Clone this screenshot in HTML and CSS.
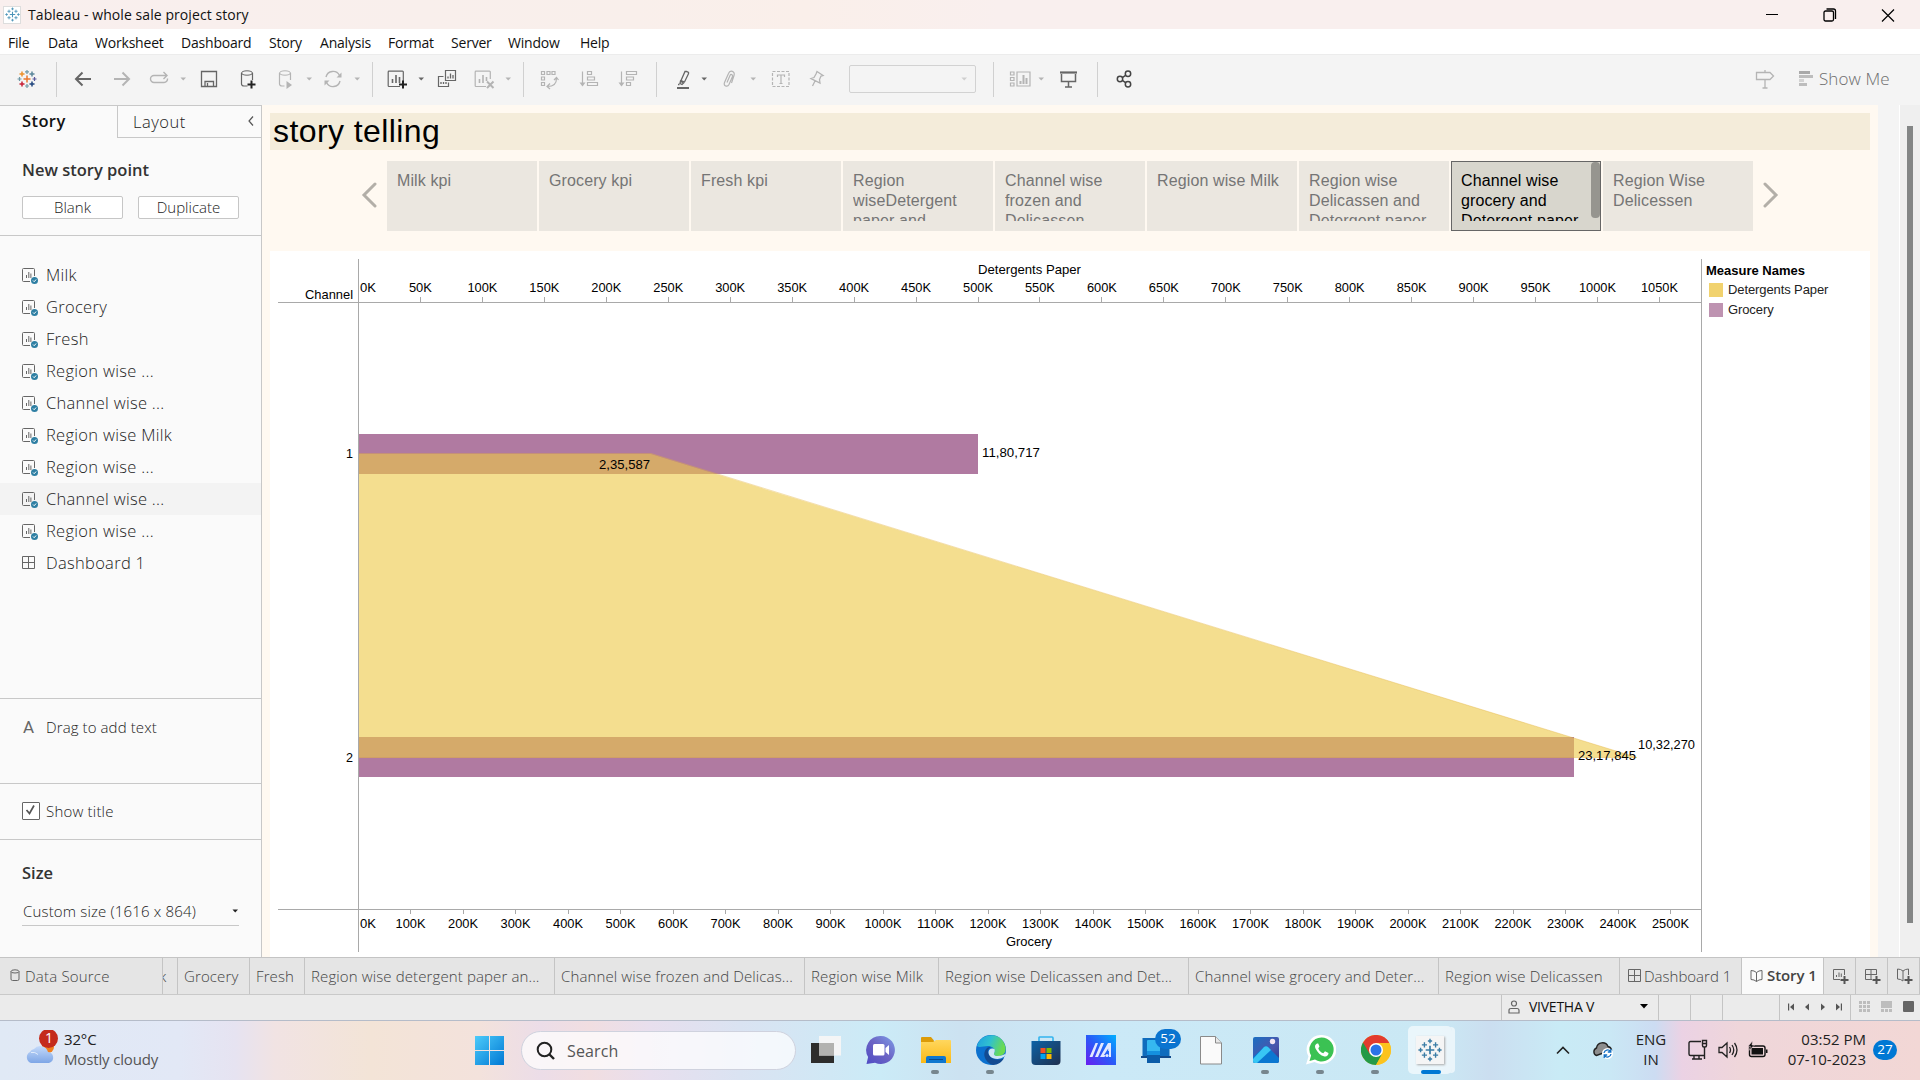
FILE: index.html
```html
<!DOCTYPE html>
<html lang="en">
<head>
<meta charset="utf-8">
<title>Tableau - whole sale project story</title>
<link rel="stylesheet" href="styles.css">
</head>
<body>
<svg class="defs" width="0" height="0">
  <symbol id="caret" viewBox="0 0 8 6"><path d="M1.500 1.500h5.500L4.200 4.500z" fill="currentColor"/></symbol>
  <symbol id="sheet" viewBox="0 0 20 18"><path d="M8 13.500H1.500a1 1 0 0 1-1-1V1.500a1 1 0 0 1 1-1h10a1 1 0 0 1 1 1V8M4.500 7v3M6.800 4v6M8.900 5.500V10" fill="none" stroke="#666"/><circle cx="12.500" cy="12.500" r="3.500" fill="#2e7fa3"/><path d="M11 12.500l1.200 1.200 1.900-2.200" stroke="#fff" fill="none"/></symbol>
  <symbol id="dash" viewBox="0 0 14 14"><path d="M.5.5h12v12H.5zM6.500.5v12M.5 6.500h12" fill="none" stroke="#666"/></symbol>
  <symbol id="book" viewBox="0 0 14 14"><path d="M1 1.500l3 .5 2.500 1.500L9 2l3-.5v9l-3 .5-2.500 1.500L4 11l-3-.5zM6.500 3.500v9" fill="none" stroke="#666"/></symbol>
  <symbol id="marks" viewBox="0 0 28 28"><g fill="none" stroke="currentColor" stroke-width="2"><path d="M14 9v10M9 14h10"/><path stroke-width="1.600" d="M7.500 5v6M4.500 8h6M20.500 5v6M17.500 8h6M7.500 17v6M4.500 20h6M20.500 17v6M17.500 20h6M14 1v5M11.500 3.500h5M14 22v5M11.500 24.500h5M3 11.500v5M.5 14h5M25 11.500v5M22.500 14h5"/></g></symbol>
</svg>

<header class="titlebar">
  <span class="app-icon"><svg width="15" height="15"><use href="#marks"/></svg></span>
  <span class="app-title">Tableau - whole sale project story</span>
  <span class="window-buttons">
    <svg width="14" height="14" viewBox="0 0 14 14"><path d="M1 6.500h12" stroke="#000"/></svg>
    <svg width="14" height="14" viewBox="0 0 14 14" fill="none" stroke="#000"><rect x="1" y="3" width="9.500" height="10" rx="1.500" stroke-width="1.300"/><path d="M3.500 1h7a2 2 0 0 1 2 2v8" stroke-width="1.300"/></svg>
    <svg width="14" height="14" viewBox="0 0 14 14"><path d="M1 1.500l12 12M13 1.500l-12 12" stroke="#000" stroke-width="1.200"/></svg>
  </span>
</header>

<nav class="menubar"><span>File</span><span>Data</span><span>Worksheet</span><span>Dashboard</span><span>Story</span><span>Analysis</span><span>Format</span><span>Server</span><span>Window</span><span>Help</span></nav>

<div class="toolbar">
  <svg class="ic logo" viewBox="0 0 24 24"><g fill="none" stroke-width="1.500"><path stroke="#e8762d" d="M12 8.500v7M8.500 12h7"/><path stroke="#eb912c" d="M7 4.500v5M4.500 7h5"/><path stroke="#5b879b" d="M17 4.500v5M14.500 7h5"/><path stroke="#c72037" d="M7 14.500v5M4.500 17h5"/><path stroke="#1f457e" d="M17 14.500v5M14.500 17h5"/><path stroke="#7199a6" stroke-width="1.200" d="M12 3v4M10 4.800h4M12 17v4M10 19h4"/><path stroke="#59589a" stroke-width="1.200" d="M19.500 10v4M17.500 12h4"/><path stroke="#7199a6" stroke-width="1.200" d="M4.500 10v4M2.500 12h4"/></g></svg>
  <i class="sep m17"></i>
  <svg class="ic m14 dark" viewBox="0 0 24 24"><path stroke-width="2" d="M20 12H5M11.500 5.500L5 12l6.500 6.500"/></svg>
  <svg class="ic m15 dim" viewBox="0 0 24 24"><path stroke-width="2" d="M4 12h15M12.500 5.500L19 12l-6.500 6.500"/></svg>
  <svg class="ic m13 dim" viewBox="0 0 24 24"><path stroke-width="1.400" d="M9 15.500H7a3.500 3.500 0 0 1-3.500-3.500A3.500 3.500 0 0 1 7 8.500h12.500M16.500 5l3.500 3.500-3.500 3.500M20.500 11.500a3.500 3.500 0 0 1-3.500 4H8"/></svg>
  <svg class="caret m8 dim"><use href="#caret"/></svg>
  <svg class="ic m10 dark" viewBox="0 0 24 24"><path stroke-width="1.300" d="M4.500 4.500h15v15h-15zM8 19.500v-5h8.500v5M10.500 16v3.500"/></svg>
  <svg class="ic m15 dark" viewBox="0 0 24 24"><path stroke-width="1.200" d="M11.500 19H8a2.500 2 0 0 1-2.500-2V6M16.500 6v7"/><ellipse cx="11" cy="6" rx="5.500" ry="2.200"/><path stroke="#222" stroke-width="2" d="M15.500 13.500v8M11.500 17.500h8"/></svg>
  <svg class="ic m14 dim" viewBox="0 0 24 24"><path stroke-width="1.200" d="M10.500 19H8a2.500 2 0 0 1-2.500-2V6M16.500 6v7"/><ellipse cx="11" cy="6" rx="5.500" ry="2.200"/><path class="solid" d="M12.500 14l5.500 4-5.500 4z"/></svg>
  <svg class="caret m7 dim"><use href="#caret"/></svg>
  <svg class="ic m8 dim" viewBox="0 0 24 24"><path stroke-width="1.400" d="M5 10a7.200 7.200 0 0 1 13.500-1.500M19 14a7.200 7.200 0 0 1-13.500 1.500"/><path class="solid" d="M20.500 5.500v5h-5zM3.500 18.500v-5h5z"/></svg>
  <svg class="caret m8 dim"><use href="#caret"/></svg>
  <i class="sep m11"></i>
  <svg class="ic m13 dark" viewBox="0 0 24 24"><path stroke-width="1.200" d="M14 19.500H3a.8.800 0 0 1-.8-.8V5a.8.800 0 0 1 .8-.8h13.500a.8.800 0 0 1 .8.800v9"/><path stroke-width="1.600" d="M6.500 12v4M10 8v8M13.500 10v6"/><path stroke="#222" stroke-width="2" d="M17 13.500v8M13 17.500h8"/></svg>
  <svg class="caret m7 dark"><use href="#caret"/></svg>
  <svg class="ic m10 dark" viewBox="0 0 24 24"><path stroke-width="1.200" d="M10.500 3.500h10v10h-10zM8.500 9.500h-5v10h10v-4"/><path stroke-width="1.300" d="M13 9.500v2M15.500 6.500v5M18 8v3.500M6 15v2M8.500 15v2M11 15v2"/></svg>
  <svg class="ic m14 dim" viewBox="0 0 24 24"><path stroke-width="1.200" d="M13 19.500H3a.8.800 0 0 1-.8-.8V5a.8.800 0 0 1 .8-.8h13.500a.8.800 0 0 1 .8.800v7"/><path stroke-width="1.600" d="M6.500 12v4M10 8v8M13.500 10v4"/><path stroke-width="2" d="M14 14.500l6.500 6.500M20.500 14.500L14 21"/></svg>
  <svg class="caret m7 dim"><use href="#caret"/></svg>
  <i class="sep m11"></i>
  <svg class="ic m14 dim" viewBox="0 0 24 24"><path stroke-width="1.200" d="M3.500 4.500h3v3h-3zM9 4.500h3v3H9zM14 4.500h3v3h-3zM3.500 10h3v3h-3zM3.500 15.500h3v3h-3zM18.500 11.500c0 5-3 8-9 8M16 13l2.500-2.500 2 2.500M12 16.500l-3 3 3 2.500"/></svg>
  <svg class="ic m15 dim" viewBox="0 0 24 24"><path stroke-width="1.200" d="M5.500 4.500v14M10.500 4.500h4v3h-4zM10.500 10h7v3h-7zM10.500 15.500h10v3h-10z"/><path class="solid" d="M2.500 15.500h6l-3 4z"/></svg>
  <svg class="ic m15 dim" viewBox="0 0 24 24"><path stroke-width="1.200" d="M5.500 4.500v14M10.500 4.500h10v3h-10zM10.500 10h7v3h-7zM10.500 15.500h4v3h-4z"/><path class="solid" d="M2.500 15.500h6l-3 4z"/></svg>
  <i class="sep m16"></i>
  <svg class="ic m14 dark" viewBox="0 0 24 24"><path stroke-width="1.300" d="M10 13.500l4-9h1.500l2 1v1.200L13.500 15zM9.500 14l3 2-1.500 1.500-2-1zM8.500 17.500H7"/><path stroke-width="2" d="M6 21h12"/></svg>
  <svg class="caret m5 dark"><use href="#caret"/></svg>
  <svg class="ic m9 dim" viewBox="0 0 24 24"><path stroke-width="1.200" d="M10 15.500l3-7c.8-1.800 3-1 2.500 1l-3.500 8c-1.500 3-6 1.500-4.500-2L11.500 6.500c1.500-4 7-2.500 5.500 2l-2.500 7.500"/></svg>
  <svg class="caret m8 dim"><use href="#caret"/></svg>
  <svg class="ic m12 dim" viewBox="0 0 24 24"><path stroke-dasharray="3 1.500" stroke-width="1.200" d="M3.500 4.500H20v15H3.500z"/><path stroke-width="1.200" d="M8.500 10V8h7v2M12 8v8.500M10.500 16.500h3"/></svg>
  <svg class="ic m12 dim" viewBox="0 0 24 24"><path stroke-width="1.300" d="M12 4.500l6 4-2 .5-1.500 3.500.5 3.500-9-4.500 3-1 2-3.500zM10 14l-2.500 5"/></svg>
  <span class="select"><svg class="caret"><use href="#caret"/></svg></span>
  <i class="sep m16"></i>
  <svg class="ic m14 dim" viewBox="0 0 24 24"><path stroke-width="1.200" d="M2.500 5h3.500v3H2.500zM2.500 10.500h3.500v3H2.500zM2.500 16h3.500v3H2.500zM9 5h13v14H9z"/><path stroke-width="2" d="M12.500 14v3M15.500 8v9M18.500 11v6"/></svg>
  <svg class="caret m5 dim"><use href="#caret"/></svg>
  <svg class="ic m11 dark" viewBox="0 0 24 24"><path stroke-width="2.200" d="M4 5.500h17"/><path stroke-width="1.500" d="M5.500 7v7.500h14V7M12.500 15v5M9 20h7"/></svg>
  <i class="sep m17"></i>
  <svg class="ic m15 dark" viewBox="0 0 24 24"><g stroke="#444" stroke-width="1.500"><circle cx="7" cy="12" r="2.700"/><circle cx="15" cy="6.800" r="2.700"/><circle cx="15" cy="17.200" r="2.700"/><path d="M9.300 10.600l3.300-2.200M9.300 13.400l3.300 2.300"/></g></svg>
  <svg class="ic push dim" viewBox="0 0 24 24"><path stroke-width="1.300" d="M3.500 5.500H17L20.500 9 17 12.500H3.500zM12 3v2.500M12 12.500V21M9.500 21h5"/></svg>
  <svg class="showme-icon" viewBox="0 0 14 16"><path fill="#a9a9a9" d="M0 0h11v3H0z"/><path fill="#bdbdbd" d="M0 4h14v3H0zM0 12h8v3H0z"/><path fill="#d3d3d3" d="M0 8h5v3H0z"/></svg>
  <span class="showme">Show Me</span>
</div>

<main class="workspace">
  <aside class="sidebar">
    <div class="side-tabs"><b>Story</b><span>Layout<svg width="8" height="12" viewBox="0 0 8 12"><path d="M6 1.500L2 6l4 4.500" fill="none" stroke="#555" stroke-width="1.200"/></svg></span></div>
    <section class="new-point">
      <h2>New story point</h2>
      <div class="buttons"><button>Blank</button><button>Duplicate</button></div>
    </section>
    <ul class="sheets">
      <li><svg width="20" height="18"><use href="#sheet"/></svg>Milk</li>
      <li><svg width="20" height="18"><use href="#sheet"/></svg>Grocery</li>
      <li><svg width="20" height="18"><use href="#sheet"/></svg>Fresh</li>
      <li><svg width="20" height="18"><use href="#sheet"/></svg>Region wise ...</li>
      <li><svg width="20" height="18"><use href="#sheet"/></svg>Channel wise ...</li>
      <li><svg width="20" height="18"><use href="#sheet"/></svg>Region wise Milk</li>
      <li><svg width="20" height="18"><use href="#sheet"/></svg>Region wise ...</li>
      <li class="current"><svg width="20" height="18"><use href="#sheet"/></svg>Channel wise ...</li>
      <li><svg width="20" height="18"><use href="#sheet"/></svg>Region wise ...</li>
      <li class="dashboard"><svg width="14" height="14"><use href="#dash"/></svg>Dashboard 1</li>
    </ul>
    <section class="drag"><span class="letter">A</span>Drag to add text</section>
    <section class="show-title"><span class="check"><svg width="16" height="16" viewBox="0 0 16 16"><path d="M3.500 7l3 3.500 4.500-8" fill="none" stroke="#555" stroke-width="1.700"/></svg></span>Show title</section>
    <section class="size">
      <h2>Size</h2>
      <div class="size-select">Custom size (1616 x 864)<svg class="caret"><use href="#caret"/></svg></div>
    </section>
  </aside>

  <div class="story">
    <h1>story telling</h1>
    <div class="navigator">
      <svg class="arrow" viewBox="0 0 16 26"><path d="M14 2L3 13l11 11"/></svg>
      <div class="point"><p>Milk kpi</p></div>
      <div class="point"><p>Grocery kpi</p></div>
      <div class="point"><p>Fresh kpi</p></div>
      <div class="point"><p>Region wiseDetergent paper and</p></div>
      <div class="point"><p>Channel wise frozen and Delicassen</p></div>
      <div class="point"><p>Region wise Milk</p></div>
      <div class="point"><p>Region wise Delicassen and Detergent paper</p></div>
      <div class="point active"><p>Channel wise grocery and Detergent paper</p></div>
      <div class="point"><p>Region Wise Delicessen</p></div>
      <svg class="arrow" viewBox="0 0 16 26"><path d="M2 2l11 11L2 24"/></svg>
    </div>
    <div class="view">
      <svg class="chart" width="1432" height="706" viewBox="270 251 1432 706">
        <g fill="#b07aa1"><rect x="359" y="434" width="619" height="40"/><rect x="359" y="737" width="1215" height="40"/></g>
        <path d="M359 454H651L1637 757.500H359z" fill="#edc948" fill-opacity=".61"/>
        <path d="M359 453.500H651L1637 757.500H359" fill="none" stroke="#e3b23c" stroke-opacity=".4"/>
        <g id="axes" stroke="#a9a9a9"><path d="M358.500 259V952M1701.500 259V952M278 302.500H1701M278 909.500H1701"/></g>
        <g id="labels">
          <text x="305" y="299" textLength="48" lengthAdjust="spacingAndGlyphs">Channel</text>
          <text x="346" y="458" textLength="7" lengthAdjust="spacingAndGlyphs">1</text>
          <text x="346" y="762" textLength="7" lengthAdjust="spacingAndGlyphs">2</text>
          <text x="978" y="274" textLength="103" lengthAdjust="spacingAndGlyphs">Detergents Paper</text>
          <text x="1006" y="946" textLength="46" lengthAdjust="spacingAndGlyphs">Grocery</text>
          <text x="982" y="457" textLength="58" lengthAdjust="spacingAndGlyphs">11,80,717</text>
          <text x="599" y="469" textLength="51" lengthAdjust="spacingAndGlyphs">2,35,587</text>
          <text x="1578" y="760" textLength="58" lengthAdjust="spacingAndGlyphs">23,17,845</text>
          <text x="1638" y="749" textLength="57" lengthAdjust="spacingAndGlyphs">10,32,270</text>
        </g>
      </svg>
      <div class="legend">
        <b>Measure Names</b>
        <span><i class="yellow"></i>Detergents Paper</span>
        <span><i class="purple"></i>Grocery</span>
      </div>
    </div>
  </div>
  <div class="scroll"><i></i></div>
</main>

<div class="tabs">
  <span class="t-source"><svg width="10" height="13" viewBox="0 0 10 13"><path d="M1 2.500v7.500q0 1.500 1.500 1.500h5Q9 11.500 9 10V2.500M1 2.500Q1 .8 5 .8t4 1.700Q9 4 5 4T1 2.500" fill="none" stroke="#666"/></svg>Data Source</span>
  <span class="t-cut">k</span>
  <span class="t-grocery">Grocery</span>
  <span class="t-fresh">Fresh</span>
  <span class="t-wide">Region wise detergent paper an...</span>
  <span class="t-wide">Channel wise frozen and Delicas...</span>
  <span class="t-milk">Region wise Milk</span>
  <span class="t-wide">Region wise Delicassen and Det...</span>
  <span class="t-wide">Channel wise grocery and Deter...</span>
  <span class="t-deli">Region wise Delicassen</span>
  <span class="t-dash"><svg width="14" height="14"><use href="#dash"/></svg>Dashboard 1</span>
  <span class="t-story"><svg width="14" height="14"><use href="#book"/></svg>Story 1</span>
  <span class="t-new"><svg width="18" height="18" viewBox="0 0 18 18"><path d="M8 12.500H1.500v-10h11V8M4.500 8v2M7 5.500V10M9.300 6.500V10" fill="none" stroke="#666"/><path d="M12.500 9v8M8.500 13h8" stroke="#555" stroke-width="2"/></svg></span>
  <span class="t-new"><svg width="18" height="18" viewBox="0 0 18 18"><path d="M8 12.500H1.500v-10h11V8M7 2.500v10M1.500 7.500h11" fill="none" stroke="#666"/><path d="M12.500 9v8M8.500 13h8" stroke="#555" stroke-width="2"/></svg></span>
  <span class="t-new"><svg width="18" height="18" viewBox="0 0 18 18"><path d="M7 14l-2.500-1.500-3-.5V2l3 .5L7 4l2.500-1.500 3-.5v6M7 4v10" fill="none" stroke="#666"/><path d="M12.500 9v8M8.500 13h8" stroke="#555" stroke-width="2"/></svg></span>
</div>

<div class="status">
  <span class="user"><svg width="12" height="14" viewBox="0 0 12 14"><path d="M6 1a2.500 2.500 0 1 1 0 5 2.500 2.500 0 1 1 0-5M1 13v-2.500Q1 8.500 3 8.500h6q2 0 2 2V13z" fill="none" stroke="#666" stroke-width="1.200"/></svg>VIVETHA V<svg class="ucaret" width="8" height="5" viewBox="0 0 8 5"><path d="M0 0h8L4 4.500z"/></svg></span>
  <span class="cell"></span><span class="cell"></span><span class="cell wide"></span>
  <span class="pager">
    <svg width="8" height="8" viewBox="0 0 8 8"><path d="M1 .5h1.200v7H1zM7 .5v7L3 4z"/></svg>
    <svg width="8" height="8" viewBox="0 0 8 8"><path d="M6 .5v7L2 4z"/></svg>
    <svg width="8" height="8" viewBox="0 0 8 8"><path d="M2 .5v7L6 4z"/></svg>
    <svg width="8" height="8" viewBox="0 0 8 8"><path d="M5.800.5H7v7H5.800zM1 .5v7L5 4z"/></svg>
  </span>
  <span class="modes">
    <svg width="11" height="11" viewBox="0 0 11 11" fill="#bdbdbd"><path d="M0 0h3v3H0zM4 0h3v3H4zM8 0h3v3H8zM0 4h3v3H0zM4 4h3v3H4zM8 4h3v3H8zM0 8h3v3H0zM4 8h3v3H4zM8 8h3v3H8z"/></svg>
    <svg width="11" height="11" viewBox="0 0 11 11" fill="#bdbdbd"><path d="M0 0h11v7H0zM0 8h3v3H0zM4 8h3v3H4zM8 8h3v3H8z"/></svg>
    <svg width="11" height="11" viewBox="0 0 11 11"><rect width="11" height="11" rx="1" fill="#666"/></svg>
  </span>
</div>

<footer class="taskbar">
  <div class="weather">
    <svg width="36" height="42" viewBox="0 0 36 42"><defs><linearGradient id="cl" x2="0" y2="1"><stop offset="0" stop-color="#c4dafa"/><stop offset="1" stop-color="#7ea6e6"/></linearGradient></defs><circle cx="23" cy="17" r="6" fill="#f0801f"/><path d="M6 33a6 6 0 0 1-1-11 5 5 0 0 1 4-3 8 8 0 0 1 14 3 5.600 5.600 0 0 1 1 11z" fill="url(#cl)"/><path d="M6 22.500q4-1 7 2" stroke="#e0ecfc" fill="none"/><circle cx="24" cy="8" r="8" fill="#c42b1c"/><circle cx="23.500" cy="8.500" r="9.500" fill="#c42b1c"/><text x="20" y="13" class="badge-text">1</text></svg>
    <p><span>32°C</span><span class="sub">Mostly cloudy</span></p>
  </div>
  <svg class="start" viewBox="0 0 29 29"><defs><linearGradient id="wn" gradientUnits="userSpaceOnUse" x1="0" y1="0" x2="29" y2="29"><stop stop-color="#4ccbfa"/><stop offset="1" stop-color="#0078d4"/></linearGradient></defs><path fill="url(#wn)" d="M0 0h14v14H0zM15 0h14v14H15zM0 15h14v14H0zM15 15h14v14H15z"/></svg>
  <div class="search"><svg width="20" height="20" viewBox="0 0 20 20"><circle cx="8.500" cy="8.500" r="6.800" fill="none" stroke="#222" stroke-width="2"/><path d="M13.500 13.500L18 18" stroke="#222" stroke-width="2.400"/></svg>Search</div>
  <div class="apps">
    <span><svg viewBox="0 0 30 30"><rect y="8" width="23" height="20" fill="#2d2d2c"/><rect x="8" y="1" width="22" height="19.500" fill="#f5f5f5" fill-opacity=".95"/><rect x="8" y="8" width="15" height="12.500" fill="#b2b2b0"/></svg></span>
    <span><svg viewBox="0 0 30 30"><defs><linearGradient id="ch" x1="0" x2="1" y2="0" y1="1"><stop stop-color="#4f4bc4"/><stop offset=".5" stop-color="#6b63c4"/><stop offset="1" stop-color="#7f9ee8"/></linearGradient></defs><path d="M15 1a14 14 0 1 1-6 26.700L.5 29l1.600-7A14 14 0 0 1 15 1z" fill="url(#ch)"/><rect x="7" y="9" width="11.500" height="11.500" rx="1.500" fill="#fff"/><path d="M19.500 13l3.500-3v10l-3.500-3z" fill="#fff"/></svg></span>
    <span class="open"><svg viewBox="0 0 30 30"><defs><linearGradient id="fo" x2="0" y2="1"><stop stop-color="#ffd75e"/><stop offset="1" stop-color="#fbb916"/></linearGradient></defs><path d="M0 3q0-1 1-1h9l3 3.500V8H0z" fill="#dc9b08"/><path d="M0 7h12l3-2h14q1 0 1 1v22H0z" fill="url(#fo)"/><path d="M5 28v-5q0-2 2-2h16q2 0 2 2v5z" fill="#0f77cf"/><path d="M8 24.500h14" stroke="#0a4a8c"/></svg></span>
    <span class="open"><svg viewBox="0 0 30 30"><defs><linearGradient id="e1" x2="1" y2=".3"><stop stop-color="#1e9fe0"/><stop offset=".5" stop-color="#30c0d0"/><stop offset="1" stop-color="#6bdb50"/></linearGradient></defs><circle cx="15" cy="15" r="15" fill="#0c71cf"/><path d="M1 11C4-1 22-4 28 8c4 8 0 13-6 13-3 0-5-1-4-3 2-3-1-7-6-7-5 0-9 2-11 0z" fill="url(#e1)"/><path d="M11 13c-6 6-1 15 6 17 5 0 9-3 11-7-7 4-16 0-16-7 0-1 1-3 3-4-2 0-3 0-4 1z" fill="#134b92"/><path d="M18.500 14a4 4 0 0 0-6 3q0 4 4 6 7 2.500 12-1.500l1.500-3-3 1.500c-5 2-10 1-9-1.500q1.500-2 .5-4.500z" fill="#cfe6f5"/></svg></span>
    <span><svg viewBox="0 0 30 30"><defs><linearGradient id="st" x2="1" y2="1"><stop stop-color="#0c62a6"/><stop offset="1" stop-color="#20304f"/></linearGradient></defs><path d="M8 7V2.500Q8 2 9 2h12q1 0 1 1v4" fill="none" stroke="#33b4ee" stroke-width="1.600"/><path d="M.5 6h29v20q0 4-4 4h-21q-4 0-4-4z" fill="url(#st)"/><path fill="#f25022" d="M9.500 13h5v5h-5z"/><path fill="#7fba00" d="M15.500 13h5v5h-5z"/><path fill="#00a4ef" d="M9.500 19h5v5h-5z"/><path fill="#ffb900" d="M15.500 19h5v5h-5z"/></svg></span>
    <span><svg viewBox="0 0 30 30"><defs><linearGradient id="as" x1="0" y1="1" x2="1" y2="0"><stop stop-color="#6a1cf0"/><stop offset=".5" stop-color="#2a5af8"/><stop offset="1" stop-color="#00b0ff"/></linearGradient></defs><path d="M0 0h30v30H0z" fill="url(#as)"/><path fill="#e3e8ff" d="M3.500 22L9.500 8H12L6.500 22zM9 22L15 8h3l-6 14zM14 22l8-14h3v8h-2.800v-2.500L18 20h1.500l-1 2z"/><circle cx="21" cy="20.500" r="1.600" fill="#e3e8ff"/><path fill="#e3e8ff" d="M23 15h2v7h-2z"/></svg></span>
    <span class="phone"><svg viewBox="0 0 30 30"><path d="M1.500 3h27v19h-27z" fill="#0f6cbd"/><path d="M0 21h30v2H0z" fill="#114a8b"/><rect x="6" y="5" width="13" height="23" rx="1" fill="#35b8f0"/><path d="M6 16h13v12H6z" fill="#1490df"/><path d="M6 20h13v8H6z" fill="#0c5ca8"/></svg><em>52</em></span>
    <span><svg viewBox="0 0 30 30"><path d="M4.500 1.500h15l6 6.500v21h-21z" fill="#fafafa" stroke="#8a8a8a"/><path d="M19.500 1.500V8h6" fill="#e8e8e8" stroke="#8a8a8a"/></svg></span>
    <span class="open"><svg viewBox="0 0 30 30"><defs><linearGradient id="ph" x2="1" y2="1"><stop stop-color="#1b6fc2"/><stop offset=".6" stop-color="#4a55ac"/><stop offset="1" stop-color="#2a3a8c"/></linearGradient></defs><rect x="2" y="2" width="26" height="26" rx="2" fill="url(#ph)"/><path d="M2 22L13 12q2-1.500 4 0l11 11v3q0 2-2 2H4q-2 0-2-2z" fill="#0a77d1"/><path d="M2 24L13 12q2-1.500 4 0l3 3L6 28H4q-2 0-2-2z" fill="#38c6f4"/><circle cx="21.500" cy="6.500" r="2.700" fill="#f3e5f2"/></svg></span>
    <span class="open"><svg viewBox="0 0 30 30"><path d="M15.500 0a14.500 14.500 0 1 1-7 27L0 29.500l2.500-8A14.500 14.500 0 0 1 15.500 0z" fill="#fff"/><path d="M15.500 2.500a12 12 0 1 1-6.500 22L3.500 26l1.600-5.500A12 12 0 0 1 15.500 2.500z" fill="#3bc253"/><path d="M11 8.500q-3 1.500-1.500 5c2 4 5 7 9 8 2 .5 4-1 4-3.500L19 16.200l-1.700 2q-4-1.500-5-5l1.200-1.700L12.200 8.500z" fill="#fff"/></svg></span>
    <span class="open"><svg viewBox="0 0 30 30"><circle cx="15" cy="15" r="15" fill="#fcc31e"/><path d="M15 15L2 7.500A15 15 0 0 0 15 30l6-10z" fill="#249a48"/><path d="M15 8H28.300A15 15 0 0 0 2 7.500L8.800 19 15 15z" fill="#e33b2e"/><path d="M15 30A15 15 0 0 0 28.300 8H15l6 11z" fill="#fcc31e"/><circle cx="15" cy="15" r="7" fill="#fff"/><circle cx="15" cy="15" r="5.500" fill="#2a73e8"/></svg></span>
    <span class="tableau"><i><svg width="24" height="24"><use href="#marks"/></svg></i></span>
  </div>
  <div class="tray">
    <svg class="up" width="16" height="10" viewBox="0 0 16 10"><path d="M2 8.500L8 2.500l6 6" fill="none" stroke="#222" stroke-width="1.600"/></svg>
    <svg class="cloud" width="22" height="18" viewBox="0 0 22 18"><path d="M4.500 14.500a4 4 0 0 1 0-7.500 6 6 0 0 1 11.500-1.500A4.500 4.500 0 0 1 19.500 9z" fill="#8d8d8d" stroke="#222" stroke-width="1.400"/><circle cx="15.500" cy="12.500" r="5.500" fill="#fff"/><path d="M12 12a3.600 3.600 0 0 1 6.500-1.500M19 13a3.600 3.600 0 0 1-6.500 1.500M18.800 8v3h-3M12.200 17v-3h3" fill="none" stroke="#1370c4" stroke-width="1.300"/></svg>
    <p class="lang"><span>ENG</span><span>IN</span></p>
    <svg class="net" width="20" height="22" viewBox="0 0 20 22"><path d="M13 2.500H2.500q-1.500 0-1.500 1.500v11q0 1.500 1.500 1.500H16M6 16.500V20M11 16.500V20M4 20h10M14.500 1.500h4v5q0 1.500-1.500 1.500h-1q-1.500 0-1.500-1.500zM16.500 8v12M14.500 4.500h4" fill="none" stroke="#222" stroke-width="1.400"/></svg>
    <svg class="vol" width="20" height="18" viewBox="0 0 20 18"><path d="M1 6.500v5h3l5 4.500V2L4 6.500zM11.500 6q2 3 0 6M14 4q3.500 5 0 10M16.500 2q5 7 0 14" fill="none" stroke="#222" stroke-width="1.300"/></svg>
    <svg class="bat" width="22" height="18" viewBox="0 0 22 18"><rect x="2.500" y="5" width="15.500" height="10.500" rx="2" fill="none" stroke="#111" stroke-width="1.400"/><rect x="4.500" y="7" width="11.500" height="6.500" fill="#111"/><path d="M19 8.500h1.500v3.500H19z" fill="#111"/><path d="M5.500 0L1 5.500h2.500L2 9.500 7.500 4H5z" fill="#111" stroke="#eed5da" stroke-width=".5"/></svg>
    <p class="clock"><span>03:52 PM</span><span>07-10-2023</span></p>
    <em class="count">27</em>
  </div>
</footer>
<script src="script.js"></script>
</body>
</html>
```
FILE: styles.css
```css
* { box-sizing: border-box; }
body { margin: 0; width: 1920px; height: 1080px; overflow: hidden; display: flex; flex-direction: column; font-family: "Open Sans", "Noto Sans", sans-serif; color: #333; background: #f4f4f4; }
h1, h2, p, ul { margin: 0; padding: 0; }
h1 { font-weight: normal; }
.defs { position: absolute; }
svg { display: block; flex: none; }
em { font-style: normal; }

.titlebar { height: 29px; display: flex; align-items: center; padding-left: 3px; background: linear-gradient(90deg, #f9efee, #f9efeb 33%, #faefea 42%, #f9efee 52%); color: #111; font-size: 14px; }
.app-icon { width: 18px; height: 18px; background: #fff; border: 1px solid #ddd; color: #4b93b8; display: grid; place-items: center; margin-right: 7px; }
.app-title { letter-spacing: .07px; }
.window-buttons { display: flex; gap: 44px; margin: 0 25px 0 auto; }

.menubar { height: 25px; flex: none; display: grid; grid-template-columns: 40px 47px 86px 88px 51px 68px 63px 57px 72px 60px; padding-left: 8px; background: #fff; color: #111; font-size: 14px; line-height: 27px; letter-spacing: -.2px; }

.toolbar { height: 51px; flex: none; display: flex; align-items: center; padding: 0 29px 2px 15px; border-top: 1px solid #ececec; background: #f4f4f4; }
.ic { width: 24px; height: 24px; fill: none; stroke: currentColor; }
.ic .solid { fill: currentColor; stroke: none; }
.caret { width: 8px; height: 6px; }
.dark { color: #666; }
.dim { color: #b4b4b4; }
.sep { width: 1px; height: 35px; background: #d0d0d0; }
.m5 { margin-left: 5px; } .m7 { margin-left: 7px; } .m8 { margin-left: 8px; } .m9 { margin-left: 9px; }
.m10 { margin-left: 10px; } .m11 { margin-left: 11px; } .m12 { margin-left: 12px; } .m13 { margin-left: 13px; }
.m14 { margin-left: 14px; } .m15 { margin-left: 15px; } .m16 { margin-left: 16px; } .m17 { margin-left: 17px; }
.select { width: 127px; height: 28px; margin: 0 1px 0 20px; border: 1px solid #d2d2d2; border-radius: 2px; display: flex; justify-content: flex-end; align-items: center; padding-right: 7px; color: #cfcfcf; }
.push { margin-left: auto; }
.showme-icon { width: 14px; height: 16px; margin: 0 6px 0 22px; }
.showme { font-size: 17px; font-weight: 300; color: #6d6d6d; width: 72px; white-space: nowrap; padding-bottom: 2px; letter-spacing: .1px; }

.workspace { height: 852px; flex: none; display: flex; }
.sidebar { width: 262px; background: #fafafa; border-right: 1px solid #c8c8c8; border-top: 1px solid #c8c8c8; display: flex; flex-direction: column; color: #222; font-weight: 300; }
.side-tabs { height: 32px; display: flex; font-size: 16.500px; }
.side-tabs b { width: 117px; padding-left: 22px; line-height: 30px; color: #111; font-weight: 600; letter-spacing: .4px; }
.side-tabs span { flex: 1; border-left: 1px solid #c8c8c8; border-bottom: 1px solid #c8c8c8; padding: 0 6px 0 15px; line-height: 32px; display: flex; justify-content: space-between; letter-spacing: .5px; }
.side-tabs svg { margin-top: 9px; }
h2 { font-size: 16.500px; font-weight: 600; color: #333; }
.new-point { height: 98px; padding: 20px 22px 0; border-bottom: 1px solid #c8c8c8; }
.new-point h2 { line-height: 24px; }
.buttons { display: flex; gap: 15px; margin-top: 14px; }
.buttons button { width: 101px; height: 23px; padding: 0 0 1px; font: 300 15px "Open Sans", sans-serif; color: #222; background: #fff; border: 1px solid #c6c6c6; border-radius: 2px; line-height: 19px; }
.sheets { list-style: none; padding-top: 23px; height: 463px; border-bottom: 1px solid #c8c8c8; }
.sheets li { height: 32px; padding: 0 0 2px 22px; display: flex; align-items: center; gap: 4px; font-size: 16.500px; letter-spacing: .3px; }
.sheets li svg { margin-top: 5px; }
.sheets .current { background: #f3f3f3; }
.sheets .dashboard { gap: 10px; }
.sheets .dashboard svg { margin-top: 2px; }
.drag { height: 85px; padding: 16px 0 0 23px; border-bottom: 1px solid #c8c8c8; display: flex; font-size: 15px; line-height: 24px; letter-spacing: .1px; }
.letter { width: 23px; font: 17px/24px "Roboto", sans-serif; color: #666; }
.show-title { height: 56px; display: flex; align-items: center; padding: 0 0 2px 22px; gap: 6px; border-bottom: 1px solid #c8c8c8; font-size: 15px; letter-spacing: .2px; }
.check { width: 18px; height: 18px; border: 1px solid #666; border-radius: 1px; background: #fff; }
.size { padding: 21px 22px 0; }
.size h2 { line-height: 24px; }
.size-select { margin-top: 14px; height: 27px; padding: 0 0 3px 1px; border-bottom: 1px solid #c8c8c8; display: flex; align-items: center; justify-content: space-between; font-size: 15px; letter-spacing: .17px; }

.story { width: 1616px; padding: 8px 8px 0; background: #fff9f1; font-family: "Liberation Sans", Arial, sans-serif; }
.story h1 { height: 37px; padding-left: 3px; line-height: 37px; font-size: 32px; letter-spacing: .42px; color: #000; background: #f4ecda; }
.navigator { height: 70px; margin: 11px 0 20px; display: flex; gap: 2px; padding-left: 91px; align-items: center; }
.arrow { width: 16px; height: 26px; margin-bottom: 2px; fill: none; stroke: #b3afa8; stroke-width: 3; stroke-linecap: round; }
.arrow:first-child { margin-right: 8px; }
.arrow:last-child { margin-left: 8px; }
.point { width: 150px; height: 70px; padding: 10px 0 0 10px; background: #ebe7e0; color: #757575; font-size: 16px; line-height: 20px; letter-spacing: .12px; }
.point p { height: 50px; overflow: hidden; width: 134px; }
.point.active { position: relative; background: #d8d6cd; border: 1px solid #666; padding: 9px 0 0 9px; color: #000; }
.point.active::after { content: ""; position: absolute; right: 0; top: 0; width: 9px; height: 56px; border-radius: 4px; background: #96958f; }
.view { height: 706px; background: #fff; display: flex; }
.chart text { font: 13.500px "Liberation Sans", Arial, sans-serif; fill: #000; }
.legend { padding: 11px 0 0 4px; font-size: 13px; color: #222; }
.legend b { display: block; font-size: 13px; line-height: 17px; color: #000; }
.legend span { display: flex; align-items: center; height: 20px; padding-left: 3px; letter-spacing: -.1px; }
.legend i { width: 14px; height: 14px; margin: 2px 5px 0 0; }
.yellow { background: #f1d26e; }
.purple { background: #be93b1; }
.scroll { flex: 1; margin-left: 21px; border-left: 1px solid #fff; background: #efefef; padding: 21px 0 0 7px; }
.scroll i { display: block; width: 6px; height: 797px; background: #848686; }

.tabs { height: 38px; flex: none; display: flex; border-top: 1px solid #c4c4c4; border-bottom: 1px solid #c9c9c9; background: #e5e5e5; color: #444; font-size: 15px; font-weight: 300; }
.tabs span { border-right: 1px solid #c4c4c4; padding-left: 6px; line-height: 37px; white-space: nowrap; overflow: hidden; display: flex; align-items: center; letter-spacing: .12px; }
.tabs .t-source { width: 163px; padding-left: 10px; gap: 5px; letter-spacing: .2px; }
.tabs .t-source svg { margin-bottom: 2px; }
.tabs .t-cut { width: 15px; padding: 0; text-indent: -4px; }
.t-grocery { width: 72px; } .t-fresh { width: 55px; } .t-wide { width: 250px; } .t-milk { width: 134px; } .t-deli { width: 181px; }
.tabs .t-dash { width: 122px; padding-left: 8px; gap: 2px; letter-spacing: 0; }
.tabs .t-story { width: 82px; background: #fafafa; font-weight: 600; padding-left: 8px; gap: 3px; letter-spacing: -.1px; line-height: 35px; padding-bottom: 1px; }
.tabs .t-new { width: 32px; padding-left: 8px; }

.status { height: 25px; flex: none; display: flex; justify-content: flex-end; background: #ebebeb; }
.status > span { border-left: 1px solid #c4c4c4; display: flex; align-items: center; padding-bottom: 2px; }
.status > .user { width: 157px; padding: 0 10px 2px 6px; gap: 9px; font-size: 14px; letter-spacing: -.25px; color: #111; }
.ucaret { margin-left: auto; }
.cell { width: 32px; } .cell.wide { width: 57px; }
.status > .pager { width: 71px; gap: 8px; padding-left: 7px; fill: #555; }
.status > .modes { width: 70px; gap: 11px; padding-left: 8px; }

.taskbar { height: 60px; flex: none; display: flex; align-items: center; border-top: 1px solid #b5bcc9; background: linear-gradient(90deg, #e0e9f5 0, #e2e8f6 180px, #e6e3f1 235px, #f1e3e3 275px, #f3e4d7 370px, #f3e2dc 480px, #ecdde8 540px, #f1dee1 590px, #e8dfee 650px, #dae3f2 740px, #d0e8f5 830px, #cbebf7 880px, #cce2f1 960px, #cbe9f7 1100px, #cae8f4 1440px, #cbdef0 1490px, #c9ebf6 1560px, #cae8f5 1610px, #ccdcf2 1655px, #ebd2e4 1682px, #efd6da 1740px, #f2d7d5 1920px); color: #222; font-size: 15px; }
.weather { display: flex; padding-left: 25px; width: 475px; gap: 3px; align-items: center; letter-spacing: -.15px; }
.weather p, .lang, .clock { padding-bottom: 4px; }
.badge-text { font: 14px "Open Sans", sans-serif; fill: #fff; }
.weather span, .lang span, .clock span { display: block; line-height: 20px; }
.weather .sub { color: #555; }
.start { width: 29px; height: 29px; margin-right: 17px; }
.search { width: 275px; height: 39px; border-radius: 20px; border: 1px solid #cfd2de; background: rgba(255,255,255,.72); display: flex; align-items: center; gap: 11px; padding-left: 14px; font-size: 16px; letter-spacing: .15px; color: #555; margin-right: 2px; }
.apps { display: flex; height: 59px; align-items: center; }
.apps > span { width: 55px; height: 59px; display: grid; place-items: center; position: relative; }
.apps > span > svg { width: 30px; height: 30px; margin-top: -1px; }
.open::after, .tableau::after { content: ""; position: absolute; left: 23px; top: 49px; width: 8px; height: 4px; border-radius: 2px; background: #77868e; }
.phone em { position: absolute; left: 27px; top: 8px; width: 26px; height: 20px; border-radius: 10px; background: #0a74d0; color: #fff; font-size: 13.500px; line-height: 19px; text-align: center; }
.tableau i { width: 44px; height: 48px; border-radius: 5px; background: rgba(255,255,255,.6); box-shadow: 4px 0 0 -1px rgba(255,255,255,.6); display: grid; place-items: center; margin: 0 0 2px -1px; color: #3a7ca5; }
.tableau i svg { background: #f5f5f5; width: 28px; height: 28px; padding: 2px; box-shadow: 1px 1px 2px #aaa; }
.tableau::after { left: 18px; width: 20px; background: #0078d4; }
.tray { display: flex; align-items: center; flex: 1; padding-left: 97px; }
.up, .cloud, .net, .vol, .bat { margin-bottom: 2px; }
.cloud { margin-left: 21px; }
.lang { width: 40px; margin-left: 17px; text-align: center; }
.net { margin-left: 17px; } .vol { margin-left: 10px; } .bat { margin-left: 9px; }
.clock { width: 97px; text-align: right; }
.count { margin: 0 0 2px 7px; width: 24px; height: 20px; border-radius: 10px; background: #0078d4; color: #fff; font-size: 13.500px; text-align: center; line-height: 19px; }
```
FILE: script.js
```js
const NS = 'http://www.w3.org/2000/svg';
const axes = document.getElementById('axes');
const labels = document.getElementById('labels');

function axis(count, unit, zero, step, tickTop, baseline) {
  for (let i = 0; i <= count; i++) {
    const x = zero + i * step;
    if (i) {
      const tick = document.createElementNS(NS, 'path');
      tick.setAttribute('d', `M${Math.floor(x) + 0.5} ${tickTop}v5`);
      axes.append(tick);
    }
    const text = document.createElementNS(NS, 'text');
    const label = i * unit + 'K';
    const width = label.length * 7 + 2;
    text.textContent = label;
    text.setAttribute('x', i ? x - width / 2 : 360);
    text.setAttribute('y', baseline);
    text.setAttribute('textLength', width);
    text.setAttribute('lengthAdjust', 'spacingAndGlyphs');
    labels.append(text);
  }
}

// Detergents Paper on top, Grocery at the bottom
axis(21, 50, 358.5, 61.95, 297, 292);
axis(25, 100, 358, 52.5, 909, 928);
```
